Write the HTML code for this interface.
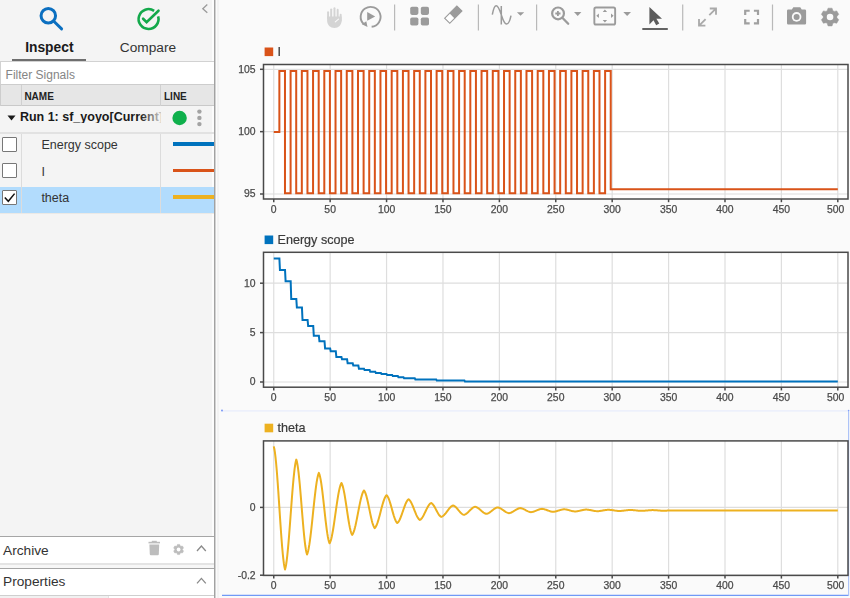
<!DOCTYPE html><html><head><meta charset="utf-8"><style>
html,body{margin:0;padding:0;width:850px;height:598px;overflow:hidden;background:#fafafa;font-family:'Liberation Sans', sans-serif;}
.t{position:absolute;line-height:1;white-space:nowrap;}
.r{position:absolute;}
svg{position:absolute;left:0;top:0;}
</style></head><body>
<div class="r" style="left:0px;top:0px;width:214px;height:598px;background:#f4f4f4;"></div>
<div class="r" style="left:212px;top:0px;width:2px;height:598px;background:#fcfcfc;"></div>
<div class="r" style="left:12px;top:58.5px;width:74px;height:3px;background:#6e6e6e;"></div>
<div class="t" style="left:25.20px;top:40.72px;font-size:13.8px;font-weight:bold;color:#1a1a1a;">Inspect</div>
<div class="t" style="left:119.80px;top:40.70px;font-size:13.7px;font-weight:normal;color:#333;">Compare</div>
<div class="r" style="left:0px;top:61.1px;width:214px;height:23.9px;background:#ffffff;box-sizing:border-box;border-top:1px solid #d2d2d2;border-left:1px solid #d2d2d2;border-bottom:1.2px solid #cdcdcd;"></div>
<div class="t" style="left:5.60px;top:69.24px;font-size:12px;font-weight:normal;color:#858585;">Filter Signals</div>
<div class="r" style="left:0px;top:85px;width:214px;height:21px;background:#e6e6e6;box-sizing:border-box;border-bottom:1.4px solid #c9c9c9;"></div>
<div class="r" style="left:0px;top:85px;width:1px;height:21px;background:#cdcdcd;"></div>
<div class="r" style="left:21px;top:84.5px;width:1px;height:21px;background:#d0d0d0;"></div>
<div class="r" style="left:160px;top:84.5px;width:1px;height:21px;background:#d0d0d0;"></div>
<div class="t" style="left:24.40px;top:91.93px;font-size:10px;font-weight:bold;color:#222;">NAME</div>
<div class="t" style="left:164.00px;top:91.93px;font-size:10px;font-weight:bold;color:#222;">LINE</div>
<div class="r" style="left:0px;top:132px;width:214px;height:1.5px;background:#e2e2e2;"></div>
<div class="t" style="left:19.90px;top:110.52px;font-size:12.5px;font-weight:bold;color:#1a1a1a;width:141px;overflow:hidden;">Run 1: sf_yoyo[Current]</div>
<div class="r" style="left:140px;top:107px;width:22px;height:24px;background:linear-gradient(to right, rgba(244,244,244,0), rgba(244,244,244,0.85));"></div>
<div class="r" style="left:0px;top:186.5px;width:214px;height:26.6px;background:#b2dcfd;"></div>
<div class="r" style="left:0px;top:213.1px;width:214px;height:0.9px;background:#ebe9e6;"></div>
<div class="r" style="left:21px;top:133.5px;width:1px;height:79px;background:#dcdcdc;"></div>
<div class="r" style="left:160px;top:133.5px;width:1px;height:79px;background:#dcdcdc;"></div>
<div class="t" style="left:41.40px;top:138.62px;font-size:12.5px;font-weight:normal;color:#333;">Energy scope</div>
<div class="t" style="left:41.40px;top:165.72px;font-size:12.5px;font-weight:normal;color:#333;">I</div>
<div class="t" style="left:41.40px;top:191.82px;font-size:12.5px;font-weight:normal;color:#333;">theta</div>
<div class="r" style="left:172.6px;top:142.2px;width:41.6px;height:3.9px;background:#0072bd;"></div>
<div class="r" style="left:172.6px;top:168.6px;width:41.6px;height:3.9px;background:#d95319;"></div>
<div class="r" style="left:172.6px;top:195.3px;width:41.6px;height:3.9px;background:#edb120;"></div>
<div class="r" style="left:2px;top:137.1px;width:15px;height:15px;background:#ffffff;box-sizing:border-box;border:1.3px solid #777;border-radius:1px;"></div>
<div class="r" style="left:2px;top:163.4px;width:15px;height:15px;background:#ffffff;box-sizing:border-box;border:1.3px solid #777;border-radius:1px;"></div>
<div class="r" style="left:2px;top:190.4px;width:15px;height:15px;background:#ffffff;box-sizing:border-box;border:1.3px solid #777;border-radius:1px;"></div>
<div class="r" style="left:0px;top:535.8px;width:214px;height:1.2px;background:#a6a6a6;"></div>
<div class="r" style="left:0px;top:537px;width:214px;height:26px;background:#ffffff;"></div>
<div class="r" style="left:0px;top:563px;width:214px;height:2.3px;background:#e4e4e4;"></div>
<div class="r" style="left:0px;top:565.3px;width:214px;height:2.6px;background:#f7f7f7;"></div>
<div class="r" style="left:0px;top:567.9px;width:214px;height:1.2px;background:#a6a6a6;"></div>
<div class="r" style="left:0px;top:569.1px;width:214px;height:26.2px;background:#ffffff;"></div>
<div class="r" style="left:0px;top:594.9px;width:214px;height:1.1px;background:#cfcfcf;"></div>
<div class="r" style="left:0px;top:596px;width:214px;height:2px;background:#ffffff;"></div>
<div class="r" style="left:0px;top:596px;width:108px;height:2px;background:#f1f1f1;"></div>
<div class="r" style="left:107.8px;top:596px;width:1px;height:2px;background:#e2e2e2;"></div>
<div class="t" style="left:3.00px;top:543.50px;font-size:13.7px;font-weight:normal;color:#333;">Archive</div>
<div class="t" style="left:3.00px;top:575.40px;font-size:13.7px;font-weight:normal;color:#333;">Properties</div>
<div class="r" style="left:214px;top:0px;width:1px;height:598px;background:#a2a2a2;"></div>
<div class="r" style="left:215px;top:0px;width:1px;height:598px;background:#d2d2d2;"></div>
<div class="r" style="left:216px;top:0px;width:1px;height:598px;background:#fbfbfb;"></div>
<div class="r" style="left:217px;top:0px;width:2px;height:598px;background:#f3f3f3;"></div>
<svg width="850" height="598" viewBox="0 0 850 598">
<circle cx="48.3" cy="15.8" r="7.25" fill="none" stroke="#0b6fc0" stroke-width="3"/>
<line x1="53.8" y1="21.2" x2="61.6" y2="28.9" stroke="#0b6fc0" stroke-width="2.9" stroke-linecap="round"/>
<path d="M 158.15 16.42 A 9.95 9.95 0 1 1 154.11 10.8" fill="none" stroke="#13a94b" stroke-width="2.6"/>
<path d="M 143.1 18.7 L 146.6 22.1 L 158.5 10.7" fill="none" stroke="#13a94b" stroke-width="2.6" stroke-linecap="round" stroke-linejoin="miter"/>
<path d="M 207.3 4.6 L 202.8 8.7 L 207.3 12.8" fill="none" stroke="#9a9a9a" stroke-width="1.3"/>
<path d="M 7.5 115.6 L 15.5 115.6 L 11.5 120.6 Z" fill="#1a1a1a"/>
<circle cx="179.6" cy="118" r="7.2" fill="#0fb04c"/>
<circle cx="199.4" cy="111.6" r="2.2" fill="#a3a3a3"/>
<circle cx="199.4" cy="117.9" r="2.2" fill="#a3a3a3"/>
<circle cx="199.4" cy="124.1" r="2.2" fill="#a3a3a3"/>
<path d="M 4.8 197.5 L 8.3 201.3 L 14.6 193.6" fill="none" stroke="#111" stroke-width="1.5"/>
<path d="M 149.4 544.6 L 159.2 544.6 L 158.8 554.3 Q 158.7 555.2 157.8 555.2 L 150.8 555.2 Q 149.9 555.2 149.8 554.3 Z" fill="#bdbdbd"/>
<rect x="148.5" y="541.8" width="11.5" height="1.6" fill="#bdbdbd"/><rect x="151.8" y="540.8" width="5" height="1.5" fill="#bdbdbd"/>
<path d="M 176.90 545.99 L 177.50 544.42 L 179.70 544.42 L 180.30 545.99 L 180.55 546.12 L 180.79 546.27 L 182.45 546.01 L 183.55 547.91 L 182.49 549.22 L 182.50 549.50 L 182.49 549.78 L 183.55 551.09 L 182.45 552.99 L 180.79 552.73 L 180.55 552.88 L 180.30 553.01 L 179.70 554.58 L 177.50 554.58 L 176.90 553.01 L 176.65 552.88 L 176.41 552.73 L 174.75 552.99 L 173.65 551.09 L 174.71 549.78 L 174.70 549.50 L 174.71 549.22 L 173.65 547.91 L 174.75 546.01 L 176.41 546.27 L 176.65 546.12 Z" fill="#bdbdbd" stroke="#bdbdbd" stroke-width="0.5" stroke-linejoin="round"/><circle cx="178.6" cy="549.5" r="1.9" fill="#ffffff"/>
<path d="M 197 551 L 201.4 546 L 205.8 551" fill="none" stroke="#8a8a8a" stroke-width="1.3"/>
<path d="M 197 583.4 L 201.4 578.4 L 205.8 583.4" fill="none" stroke="#8a8a8a" stroke-width="1.3"/>
<rect x="394.0" y="4.5" width="1.2" height="26" fill="#b9b9b9"/>
<rect x="477.8" y="4.5" width="1.2" height="26" fill="#b9b9b9"/>
<rect x="536.0" y="4.5" width="1.2" height="26" fill="#b9b9b9"/>
<rect x="682.1" y="4.5" width="1.2" height="26" fill="#b9b9b9"/>
<rect x="771.9" y="4.5" width="1.2" height="26" fill="#b9b9b9"/>
<rect x="327.1" y="11.2" width="1.95" height="7.800000000000001" rx="0.97" fill="#d4d4d4"/>
<rect x="330.2" y="8.4" width="1.95" height="10.6" rx="0.97" fill="#d4d4d4"/>
<rect x="333.5" y="7.2" width="1.95" height="11.8" rx="0.97" fill="#d4d4d4"/>
<rect x="336.7" y="8.8" width="1.95" height="10.2" rx="0.97" fill="#d4d4d4"/>
<rect x="339.7" y="13.8" width="1.95" height="8" rx="0.97" fill="#d4d4d4"/>
<path d="M 327.1 16.5 L 341.65 16.5 L 341.65 20.5 C 341.65 25 338.5 27.9 334.4 27.9 C 330.3 27.9 327.1 25 327.1 20.5 Z" fill="#d4d4d4"/>
<line x1="335.3" y1="21.8" x2="338.5" y2="19.1" stroke="#fafafa" stroke-width="1.1" stroke-linecap="round"/>
<path d="M 371.64 26.75 A 9.95 9.95 0 1 0 363.81 24.13" fill="none" stroke="#9b9b9b" stroke-width="1.9"/>
<path d="M 361.9 24.2 L 367.5 26.9 L 366.3 21.2 Z" fill="#9b9b9b"/>
<path d="M 367.2 12.1 L 375.2 16.45 L 367.2 20.8 Z" fill="#9b9b9b"/>
<rect x="410.2" y="6.8" width="8.2" height="8.1" rx="1.8" fill="#9b9b9b"/>
<rect x="410.2" y="17.4" width="8.2" height="8.1" rx="1.8" fill="#9b9b9b"/>
<rect x="420.8" y="6.8" width="8.2" height="8.1" rx="1.8" fill="#9b9b9b"/>
<rect x="420.8" y="17.4" width="8.2" height="8.1" rx="1.8" fill="#9b9b9b"/>
<g transform="translate(453.3,14.6) rotate(-45)"><rect x="-8.6" y="-3.6" width="17.2" height="7.2" fill="#fff" stroke="#9b9b9b" stroke-width="1.1"/><rect x="-1.8" y="-3.6" width="10.4" height="7.2" fill="#9b9b9b"/></g>
<path d="M 492.3 14.6 C 493.3 9.5 494.5 5.8 496.2 5.8 C 498.5 5.8 500 11 501.5 15.5 C 503 20 504.5 24 506.5 24 C 508.5 24 510.3 19 511 15.6 M 501.3 6 L 501.3 24.5" fill="none" stroke="#9b9b9b" stroke-width="1.5"/>
<path d="M 516.9 12.3 L 524.2 12.3 L 520.55 15.8 Z" fill="#9b9b9b"/>
<circle cx="558.05" cy="13.4" r="5.9" fill="none" stroke="#9b9b9b" stroke-width="2.2"/>
<line x1="562.6" y1="18" x2="568.2" y2="23.7" stroke="#9b9b9b" stroke-width="2.3" stroke-linecap="round"/>
<path d="M 557.9 10.9 L 557.9 16.1 M 555.3 13.5 L 560.5 13.5" stroke="#9b9b9b" stroke-width="1.8"/>
<path d="M 574 11.9 L 581.4 11.9 L 577.7 15.9 Z" fill="#9b9b9b"/>
<rect x="594.35" y="7.55" width="20.8" height="17" rx="1.6" fill="none" stroke="#9b9b9b" stroke-width="1.9"/>
<path d="M 602.7 11.9 L 604.9 9.6 L 607.1 11.9 Z M 602.7 19.9 L 604.9 22.4 L 607.1 19.9 Z M 598.9 13.6 L 596.3 15.8 L 598.9 18 Z M 611 13.6 L 613.6 15.8 L 611 18 Z" fill="#9b9b9b"/>
<path d="M 623.3 11.9 L 631 11.9 L 627.15 16 Z" fill="#9b9b9b"/>
<path d="M 649.4 7 L 662 18.7 L 656.4 18.7 L 659.3 23.6 L 656.2 25.2 L 653.5 20.3 L 649.4 24.4 Z" fill="#5c5c5c"/>
<rect x="642.3" y="28.05" width="25.5" height="1.9" fill="#5c5c5c"/>
<path d="M 705.6 19.1 L 699.6 25.1 M 699 18.9 L 699 25.6 L 705.4 25.6 M 709.3 15.2 L 715.4 9.1 M 709.8 8.5 L 716 8.5 L 716 14.7" fill="none" stroke="#aaaaaa" stroke-width="1.85"/>
<path d="M 745.2 14.9 L 745.2 10.75 L 749.7 10.75 M 753.9 10.75 L 758 10.75 L 758 14.9 M 758 19 L 758 23.3 L 753.9 23.3 M 749.7 23.3 L 745.2 23.3 L 745.2 19" fill="none" stroke="#a0a0a0" stroke-width="2.2"/>
<path d="M 787 10.8 Q 787 9.5 788.3 9.5 L 791.9 9.5 L 793.3 7.35 L 800.3 7.35 L 801.7 9.5 L 804.8 9.5 Q 806.1 9.5 806.1 10.8 L 806.1 23.2 Q 806.1 24.5 804.8 24.5 L 788.3 24.5 Q 787 24.5 787 23.2 Z" fill="#9b9b9b"/>
<circle cx="796.6" cy="16.9" r="4.8" fill="#fafafa"/><circle cx="796.6" cy="16.9" r="3.0" fill="#9b9b9b"/>
<path d="M 827.15 10.79 L 828.05 8.17 L 832.05 8.17 L 832.95 10.79 L 833.50 11.07 L 834.02 11.41 L 836.74 10.88 L 838.74 14.34 L 836.92 16.43 L 836.95 17.05 L 836.92 17.67 L 838.74 19.76 L 836.74 23.22 L 834.02 22.69 L 833.50 23.03 L 832.95 23.31 L 832.05 25.93 L 828.05 25.93 L 827.15 23.31 L 826.60 23.03 L 826.08 22.69 L 823.36 23.22 L 821.36 19.76 L 823.18 17.67 L 823.15 17.05 L 823.18 16.43 L 821.36 14.34 L 823.36 10.88 L 826.08 11.41 L 826.60 11.07 Z" fill="#9b9b9b" stroke="#9b9b9b" stroke-width="0.5" stroke-linejoin="round"/><circle cx="830.05" cy="17.05" r="3.3" fill="#fafafa"/>
</svg><svg width="850" height="598" viewBox="0 0 850 598" style="font-family:'Liberation Sans', sans-serif;will-change:transform">
<line x1="221.5" y1="410.9" x2="848" y2="410.9" stroke="#edf0fb" stroke-width="1.6"/>
<line x1="222" y1="595.4" x2="848.7" y2="595.4" stroke="#7099f6" stroke-width="1.1"/>
<line x1="848.6" y1="410.2" x2="848.6" y2="596" stroke="#a9c1f7" stroke-width="1.1"/><circle cx="848.6" cy="410.5" r="0.8" fill="#7f9df7"/>
<circle cx="222" cy="410.5" r="0.9" fill="#6f8ff5"/>
<rect x="263.5" y="64.5" width="584.5" height="134.5" fill="#ffffff"/>
<line x1="273.75" y1="64.5" x2="273.75" y2="199.0" stroke="#dedede" stroke-width="1.2"/>
<line x1="330.15" y1="64.5" x2="330.15" y2="199.0" stroke="#dedede" stroke-width="1.2"/>
<line x1="386.56" y1="64.5" x2="386.56" y2="199.0" stroke="#dedede" stroke-width="1.2"/>
<line x1="442.97" y1="64.5" x2="442.97" y2="199.0" stroke="#dedede" stroke-width="1.2"/>
<line x1="499.37" y1="64.5" x2="499.37" y2="199.0" stroke="#dedede" stroke-width="1.2"/>
<line x1="555.77" y1="64.5" x2="555.77" y2="199.0" stroke="#dedede" stroke-width="1.2"/>
<line x1="612.18" y1="64.5" x2="612.18" y2="199.0" stroke="#dedede" stroke-width="1.2"/>
<line x1="668.58" y1="64.5" x2="668.58" y2="199.0" stroke="#dedede" stroke-width="1.2"/>
<line x1="724.99" y1="64.5" x2="724.99" y2="199.0" stroke="#dedede" stroke-width="1.2"/>
<line x1="781.39" y1="64.5" x2="781.39" y2="199.0" stroke="#dedede" stroke-width="1.2"/>
<line x1="837.80" y1="64.5" x2="837.80" y2="199.0" stroke="#dedede" stroke-width="1.2"/>
<line x1="263.5" y1="194.00" x2="848.0" y2="194.00" stroke="#dedede" stroke-width="1.2"/>
<line x1="263.5" y1="131.65" x2="848.0" y2="131.65" stroke="#dedede" stroke-width="1.2"/>
<line x1="263.5" y1="69.30" x2="848.0" y2="69.30" stroke="#dedede" stroke-width="1.2"/>
<path d="M 273.75 132.05 L 279.37 132.05 L 279.37 70.90 L 279.37 70.90 L 284.98 70.90 L 284.98 193.20 L 290.60 193.20 L 290.60 70.90 L 296.21 70.90 L 296.21 193.20 L 301.83 193.20 L 301.83 70.90 L 307.45 70.90 L 307.45 193.20 L 313.06 193.20 L 313.06 70.90 L 318.68 70.90 L 318.68 193.20 L 324.30 193.20 L 324.30 70.90 L 329.91 70.90 L 329.91 193.20 L 335.53 193.20 L 335.53 70.90 L 341.14 70.90 L 341.14 193.20 L 346.76 193.20 L 346.76 70.90 L 352.38 70.90 L 352.38 193.20 L 357.99 193.20 L 357.99 70.90 L 363.61 70.90 L 363.61 193.20 L 369.23 193.20 L 369.23 70.90 L 374.84 70.90 L 374.84 193.20 L 380.46 193.20 L 380.46 70.90 L 386.07 70.90 L 386.07 193.20 L 391.69 193.20 L 391.69 70.90 L 397.31 70.90 L 397.31 193.20 L 402.92 193.20 L 402.92 70.90 L 408.54 70.90 L 408.54 193.20 L 414.16 193.20 L 414.16 70.90 L 419.77 70.90 L 419.77 193.20 L 425.39 193.20 L 425.39 70.90 L 431.00 70.90 L 431.00 193.20 L 436.62 193.20 L 436.62 70.90 L 442.24 70.90 L 442.24 193.20 L 447.85 193.20 L 447.85 70.90 L 453.47 70.90 L 453.47 193.20 L 459.09 193.20 L 459.09 70.90 L 464.70 70.90 L 464.70 193.20 L 470.32 193.20 L 470.32 70.90 L 475.93 70.90 L 475.93 193.20 L 481.55 193.20 L 481.55 70.90 L 487.17 70.90 L 487.17 193.20 L 492.78 193.20 L 492.78 70.90 L 498.40 70.90 L 498.40 193.20 L 504.02 193.20 L 504.02 70.90 L 509.63 70.90 L 509.63 193.20 L 515.25 193.20 L 515.25 70.90 L 520.86 70.90 L 520.86 193.20 L 526.48 193.20 L 526.48 70.90 L 532.10 70.90 L 532.10 193.20 L 537.71 193.20 L 537.71 70.90 L 543.33 70.90 L 543.33 193.20 L 548.95 193.20 L 548.95 70.90 L 554.56 70.90 L 554.56 193.20 L 560.18 193.20 L 560.18 70.90 L 565.79 70.90 L 565.79 193.20 L 571.41 193.20 L 571.41 70.90 L 577.03 70.90 L 577.03 193.20 L 582.64 193.20 L 582.64 70.90 L 588.26 70.90 L 588.26 193.20 L 593.88 193.20 L 593.88 70.90 L 599.49 70.90 L 599.49 193.20 L 605.11 193.20 L 605.11 70.90 L 610.72 70.90 L 610.72 189.29 L 837.80 189.29" fill="none" stroke="#d95319" stroke-width="2" stroke-linejoin="miter"/>
<rect x="263.5" y="64.5" width="584.5" height="134.5" fill="none" stroke="#4a4a4a" stroke-width="1.5"/>
<line x1="260.0" y1="194.00" x2="263.5" y2="194.00" stroke="#4a4a4a" stroke-width="1.5"/>
<text x="255.6" y="197.40" text-anchor="end" font-size="10.4" fill="#4a4a4a" stroke="#4a4a4a" stroke-width="0.25">95</text>
<line x1="260.0" y1="131.65" x2="263.5" y2="131.65" stroke="#4a4a4a" stroke-width="1.5"/>
<text x="255.6" y="135.05" text-anchor="end" font-size="10.4" fill="#4a4a4a" stroke="#4a4a4a" stroke-width="0.25">100</text>
<line x1="260.0" y1="69.30" x2="263.5" y2="69.30" stroke="#4a4a4a" stroke-width="1.5"/>
<text x="255.6" y="72.70" text-anchor="end" font-size="10.4" fill="#4a4a4a" stroke="#4a4a4a" stroke-width="0.25">105</text>
<line x1="273.75" y1="199.0" x2="273.75" y2="202.2" stroke="#4a4a4a" stroke-width="1.5"/>
<text x="273.75" y="212.60" text-anchor="middle" font-size="10.4" fill="#4a4a4a" stroke="#4a4a4a" stroke-width="0.25">0</text>
<line x1="330.15" y1="199.0" x2="330.15" y2="202.2" stroke="#4a4a4a" stroke-width="1.5"/>
<text x="330.15" y="212.60" text-anchor="middle" font-size="10.4" fill="#4a4a4a" stroke="#4a4a4a" stroke-width="0.25">50</text>
<line x1="386.56" y1="199.0" x2="386.56" y2="202.2" stroke="#4a4a4a" stroke-width="1.5"/>
<text x="386.56" y="212.60" text-anchor="middle" font-size="10.4" fill="#4a4a4a" stroke="#4a4a4a" stroke-width="0.25">100</text>
<line x1="442.97" y1="199.0" x2="442.97" y2="202.2" stroke="#4a4a4a" stroke-width="1.5"/>
<text x="442.97" y="212.60" text-anchor="middle" font-size="10.4" fill="#4a4a4a" stroke="#4a4a4a" stroke-width="0.25">150</text>
<line x1="499.37" y1="199.0" x2="499.37" y2="202.2" stroke="#4a4a4a" stroke-width="1.5"/>
<text x="499.37" y="212.60" text-anchor="middle" font-size="10.4" fill="#4a4a4a" stroke="#4a4a4a" stroke-width="0.25">200</text>
<line x1="555.77" y1="199.0" x2="555.77" y2="202.2" stroke="#4a4a4a" stroke-width="1.5"/>
<text x="555.77" y="212.60" text-anchor="middle" font-size="10.4" fill="#4a4a4a" stroke="#4a4a4a" stroke-width="0.25">250</text>
<line x1="612.18" y1="199.0" x2="612.18" y2="202.2" stroke="#4a4a4a" stroke-width="1.5"/>
<text x="612.18" y="212.60" text-anchor="middle" font-size="10.4" fill="#4a4a4a" stroke="#4a4a4a" stroke-width="0.25">300</text>
<line x1="668.58" y1="199.0" x2="668.58" y2="202.2" stroke="#4a4a4a" stroke-width="1.5"/>
<text x="668.58" y="212.60" text-anchor="middle" font-size="10.4" fill="#4a4a4a" stroke="#4a4a4a" stroke-width="0.25">350</text>
<line x1="724.99" y1="199.0" x2="724.99" y2="202.2" stroke="#4a4a4a" stroke-width="1.5"/>
<text x="724.99" y="212.60" text-anchor="middle" font-size="10.4" fill="#4a4a4a" stroke="#4a4a4a" stroke-width="0.25">400</text>
<line x1="781.39" y1="199.0" x2="781.39" y2="202.2" stroke="#4a4a4a" stroke-width="1.5"/>
<text x="781.39" y="212.60" text-anchor="middle" font-size="10.4" fill="#4a4a4a" stroke="#4a4a4a" stroke-width="0.25">450</text>
<line x1="837.80" y1="199.0" x2="837.80" y2="202.2" stroke="#4a4a4a" stroke-width="1.5"/>
<text x="835.70" y="212.60" text-anchor="middle" font-size="10.4" fill="#4a4a4a" stroke="#4a4a4a" stroke-width="0.25">500</text>
<rect x="264.6" y="47.5" width="8.6" height="8.6" fill="#d95319"/>
<text x="277.5" y="56.20" font-size="12.6" fill="#3a3a3a" stroke="#3a3a3a" stroke-width="0.2">I</text>
<rect x="263.5" y="252.3" width="584.5" height="134.89999999999998" fill="#ffffff"/>
<line x1="273.75" y1="252.3" x2="273.75" y2="387.2" stroke="#dedede" stroke-width="1.2"/>
<line x1="330.15" y1="252.3" x2="330.15" y2="387.2" stroke="#dedede" stroke-width="1.2"/>
<line x1="386.56" y1="252.3" x2="386.56" y2="387.2" stroke="#dedede" stroke-width="1.2"/>
<line x1="442.97" y1="252.3" x2="442.97" y2="387.2" stroke="#dedede" stroke-width="1.2"/>
<line x1="499.37" y1="252.3" x2="499.37" y2="387.2" stroke="#dedede" stroke-width="1.2"/>
<line x1="555.77" y1="252.3" x2="555.77" y2="387.2" stroke="#dedede" stroke-width="1.2"/>
<line x1="612.18" y1="252.3" x2="612.18" y2="387.2" stroke="#dedede" stroke-width="1.2"/>
<line x1="668.58" y1="252.3" x2="668.58" y2="387.2" stroke="#dedede" stroke-width="1.2"/>
<line x1="724.99" y1="252.3" x2="724.99" y2="387.2" stroke="#dedede" stroke-width="1.2"/>
<line x1="781.39" y1="252.3" x2="781.39" y2="387.2" stroke="#dedede" stroke-width="1.2"/>
<line x1="837.80" y1="252.3" x2="837.80" y2="387.2" stroke="#dedede" stroke-width="1.2"/>
<line x1="263.5" y1="382.00" x2="848.0" y2="382.00" stroke="#dedede" stroke-width="1.2"/>
<line x1="263.5" y1="332.60" x2="848.0" y2="332.60" stroke="#dedede" stroke-width="1.2"/>
<line x1="263.5" y1="283.20" x2="848.0" y2="283.20" stroke="#dedede" stroke-width="1.2"/>
<path d="M 273.75 258.50 L 279.39 258.50 L 279.95 269.96 L 285.03 269.96 L 285.60 281.22 L 290.67 281.22 L 291.24 299.01 L 296.31 299.01 L 296.88 307.60 L 301.95 307.60 L 302.52 319.95 L 307.59 319.95 L 308.16 325.88 L 313.23 325.88 L 313.80 335.86 L 318.87 335.86 L 319.44 341.20 L 324.51 341.20 L 325.08 348.51 L 330.15 348.51 L 330.72 351.37 L 335.80 351.37 L 336.36 357.00 L 341.44 357.00 L 342.00 359.28 L 347.08 359.28 L 347.64 363.33 L 352.72 363.33 L 353.28 365.60 L 358.36 365.60 L 358.92 368.76 L 364.00 368.76 L 364.56 370.05 L 369.64 370.05 L 370.20 371.82 L 375.28 371.82 L 375.84 373.01 L 380.92 373.01 L 381.48 374.10 L 386.56 374.10 L 387.12 374.99 L 392.20 374.99 L 392.76 375.97 L 397.84 375.97 L 398.41 377.16 L 403.48 377.16 L 404.05 378.15 L 414.76 378.15 L 415.33 379.43 L 436.20 379.43 L 436.76 380.42 L 464.40 380.42 L 464.96 381.51 L 837.80 381.51" fill="none" stroke="#0072bd" stroke-width="2" stroke-linejoin="miter"/>
<rect x="263.5" y="252.3" width="584.5" height="134.89999999999998" fill="none" stroke="#4a4a4a" stroke-width="1.5"/>
<line x1="260.0" y1="382.00" x2="263.5" y2="382.00" stroke="#4a4a4a" stroke-width="1.5"/>
<text x="255.6" y="385.40" text-anchor="end" font-size="10.4" fill="#4a4a4a" stroke="#4a4a4a" stroke-width="0.25">0</text>
<line x1="260.0" y1="332.60" x2="263.5" y2="332.60" stroke="#4a4a4a" stroke-width="1.5"/>
<text x="255.6" y="336.00" text-anchor="end" font-size="10.4" fill="#4a4a4a" stroke="#4a4a4a" stroke-width="0.25">5</text>
<line x1="260.0" y1="283.20" x2="263.5" y2="283.20" stroke="#4a4a4a" stroke-width="1.5"/>
<text x="255.6" y="286.60" text-anchor="end" font-size="10.4" fill="#4a4a4a" stroke="#4a4a4a" stroke-width="0.25">10</text>
<line x1="273.75" y1="387.2" x2="273.75" y2="390.4" stroke="#4a4a4a" stroke-width="1.5"/>
<text x="273.75" y="400.80" text-anchor="middle" font-size="10.4" fill="#4a4a4a" stroke="#4a4a4a" stroke-width="0.25">0</text>
<line x1="330.15" y1="387.2" x2="330.15" y2="390.4" stroke="#4a4a4a" stroke-width="1.5"/>
<text x="330.15" y="400.80" text-anchor="middle" font-size="10.4" fill="#4a4a4a" stroke="#4a4a4a" stroke-width="0.25">50</text>
<line x1="386.56" y1="387.2" x2="386.56" y2="390.4" stroke="#4a4a4a" stroke-width="1.5"/>
<text x="386.56" y="400.80" text-anchor="middle" font-size="10.4" fill="#4a4a4a" stroke="#4a4a4a" stroke-width="0.25">100</text>
<line x1="442.97" y1="387.2" x2="442.97" y2="390.4" stroke="#4a4a4a" stroke-width="1.5"/>
<text x="442.97" y="400.80" text-anchor="middle" font-size="10.4" fill="#4a4a4a" stroke="#4a4a4a" stroke-width="0.25">150</text>
<line x1="499.37" y1="387.2" x2="499.37" y2="390.4" stroke="#4a4a4a" stroke-width="1.5"/>
<text x="499.37" y="400.80" text-anchor="middle" font-size="10.4" fill="#4a4a4a" stroke="#4a4a4a" stroke-width="0.25">200</text>
<line x1="555.77" y1="387.2" x2="555.77" y2="390.4" stroke="#4a4a4a" stroke-width="1.5"/>
<text x="555.77" y="400.80" text-anchor="middle" font-size="10.4" fill="#4a4a4a" stroke="#4a4a4a" stroke-width="0.25">250</text>
<line x1="612.18" y1="387.2" x2="612.18" y2="390.4" stroke="#4a4a4a" stroke-width="1.5"/>
<text x="612.18" y="400.80" text-anchor="middle" font-size="10.4" fill="#4a4a4a" stroke="#4a4a4a" stroke-width="0.25">300</text>
<line x1="668.58" y1="387.2" x2="668.58" y2="390.4" stroke="#4a4a4a" stroke-width="1.5"/>
<text x="668.58" y="400.80" text-anchor="middle" font-size="10.4" fill="#4a4a4a" stroke="#4a4a4a" stroke-width="0.25">350</text>
<line x1="724.99" y1="387.2" x2="724.99" y2="390.4" stroke="#4a4a4a" stroke-width="1.5"/>
<text x="724.99" y="400.80" text-anchor="middle" font-size="10.4" fill="#4a4a4a" stroke="#4a4a4a" stroke-width="0.25">400</text>
<line x1="781.39" y1="387.2" x2="781.39" y2="390.4" stroke="#4a4a4a" stroke-width="1.5"/>
<text x="781.39" y="400.80" text-anchor="middle" font-size="10.4" fill="#4a4a4a" stroke="#4a4a4a" stroke-width="0.25">450</text>
<line x1="837.80" y1="387.2" x2="837.80" y2="390.4" stroke="#4a4a4a" stroke-width="1.5"/>
<text x="835.70" y="400.80" text-anchor="middle" font-size="10.4" fill="#4a4a4a" stroke="#4a4a4a" stroke-width="0.25">500</text>
<rect x="264.6" y="235.5" width="8.6" height="8.6" fill="#0072bd"/>
<text x="277.5" y="244.20" font-size="12.6" fill="#3a3a3a" stroke="#3a3a3a" stroke-width="0.2">Energy scope</text>
<rect x="263.5" y="440.9" width="584.5" height="134.5" fill="#ffffff"/>
<line x1="273.75" y1="440.9" x2="273.75" y2="575.4" stroke="#dedede" stroke-width="1.2"/>
<line x1="330.15" y1="440.9" x2="330.15" y2="575.4" stroke="#dedede" stroke-width="1.2"/>
<line x1="386.56" y1="440.9" x2="386.56" y2="575.4" stroke="#dedede" stroke-width="1.2"/>
<line x1="442.97" y1="440.9" x2="442.97" y2="575.4" stroke="#dedede" stroke-width="1.2"/>
<line x1="499.37" y1="440.9" x2="499.37" y2="575.4" stroke="#dedede" stroke-width="1.2"/>
<line x1="555.77" y1="440.9" x2="555.77" y2="575.4" stroke="#dedede" stroke-width="1.2"/>
<line x1="612.18" y1="440.9" x2="612.18" y2="575.4" stroke="#dedede" stroke-width="1.2"/>
<line x1="668.58" y1="440.9" x2="668.58" y2="575.4" stroke="#dedede" stroke-width="1.2"/>
<line x1="724.99" y1="440.9" x2="724.99" y2="575.4" stroke="#dedede" stroke-width="1.2"/>
<line x1="781.39" y1="440.9" x2="781.39" y2="575.4" stroke="#dedede" stroke-width="1.2"/>
<line x1="837.80" y1="440.9" x2="837.80" y2="575.4" stroke="#dedede" stroke-width="1.2"/>
<line x1="263.5" y1="575.20" x2="848.0" y2="575.20" stroke="#dedede" stroke-width="1.2"/>
<line x1="263.5" y1="507.40" x2="848.0" y2="507.40" stroke="#dedede" stroke-width="1.2"/>
<path d="M 273.75 446.38 L 274.31 448.76 L 274.88 452.18 L 275.44 456.61 L 276.01 461.99 L 276.57 468.22 L 277.13 475.21 L 277.70 482.82 L 278.26 490.91 L 278.83 499.33 L 279.39 507.91 L 279.95 516.49 L 280.52 524.91 L 281.08 533.00 L 281.65 540.61 L 282.21 547.59 L 282.77 553.83 L 283.34 559.21 L 283.90 563.64 L 284.47 567.06 L 285.03 569.44 L 285.60 567.32 L 286.16 564.26 L 286.72 560.30 L 287.29 555.50 L 287.85 549.94 L 288.42 543.71 L 288.98 536.91 L 289.54 529.69 L 290.11 522.18 L 290.67 514.52 L 291.24 506.86 L 291.80 499.34 L 292.36 492.12 L 292.93 485.33 L 293.49 479.10 L 294.06 473.53 L 294.62 468.73 L 295.18 464.78 L 295.75 461.72 L 296.31 459.60 L 296.88 461.55 L 297.44 464.40 L 298.00 468.10 L 298.57 472.60 L 299.13 477.82 L 299.70 483.64 L 300.26 489.97 L 300.82 496.66 L 301.39 503.57 L 301.95 510.55 L 302.52 517.46 L 303.08 524.15 L 303.64 530.48 L 304.21 536.31 L 304.77 541.52 L 305.34 546.02 L 305.90 549.72 L 306.46 552.57 L 307.03 554.52 L 307.59 553.03 L 308.16 550.92 L 308.72 548.19 L 309.29 544.88 L 309.85 541.05 L 310.41 536.75 L 310.98 532.05 L 311.54 527.04 L 312.11 521.79 L 312.67 516.39 L 313.23 510.95 L 313.80 505.56 L 314.36 500.31 L 314.93 495.29 L 315.49 490.59 L 316.05 486.29 L 316.62 482.46 L 317.18 479.16 L 317.75 476.43 L 318.31 474.31 L 318.87 472.82 L 319.44 474.27 L 320.00 476.39 L 320.57 479.14 L 321.13 482.48 L 321.69 486.35 L 322.26 490.68 L 322.82 495.38 L 323.39 500.35 L 323.95 505.48 L 324.51 510.67 L 325.08 515.81 L 325.64 520.77 L 326.21 525.47 L 326.77 529.80 L 327.33 533.68 L 327.90 537.02 L 328.46 539.77 L 329.03 541.88 L 329.59 543.33 L 330.15 542.24 L 330.72 540.67 L 331.28 538.66 L 331.85 536.22 L 332.41 533.39 L 332.98 530.21 L 333.54 526.74 L 334.10 523.03 L 334.67 519.16 L 335.23 515.17 L 335.80 511.15 L 336.36 507.17 L 336.92 503.29 L 337.49 499.59 L 338.05 496.12 L 338.62 492.94 L 339.18 490.11 L 339.74 487.67 L 340.31 485.65 L 340.87 484.09 L 341.44 482.99 L 342.00 484.06 L 342.56 485.61 L 343.13 487.64 L 343.69 490.10 L 344.26 492.95 L 344.82 496.13 L 345.38 499.59 L 345.95 503.24 L 346.51 507.02 L 347.08 510.83 L 347.64 514.61 L 348.20 518.27 L 348.77 521.72 L 349.33 524.91 L 349.90 527.76 L 350.46 530.21 L 351.02 532.24 L 351.59 533.79 L 352.15 534.86 L 352.72 534.05 L 353.28 532.90 L 353.85 531.42 L 354.41 529.62 L 354.97 527.54 L 355.54 525.20 L 356.10 522.65 L 356.67 519.92 L 357.23 517.06 L 357.79 514.13 L 358.36 511.18 L 358.92 508.24 L 359.49 505.39 L 360.05 502.66 L 360.61 500.11 L 361.18 497.77 L 361.74 495.69 L 362.31 493.89 L 362.87 492.41 L 363.43 491.26 L 364.00 490.45 L 364.56 491.22 L 365.13 492.35 L 365.69 493.82 L 366.25 495.60 L 366.82 497.67 L 367.38 499.98 L 367.95 502.49 L 368.51 505.14 L 369.07 507.88 L 369.64 510.65 L 370.20 513.39 L 370.77 516.04 L 371.33 518.55 L 371.89 520.86 L 372.46 522.93 L 373.02 524.71 L 373.59 526.18 L 374.15 527.31 L 374.71 528.08 L 375.28 527.48 L 375.84 526.63 L 376.41 525.53 L 376.97 524.20 L 377.54 522.66 L 378.10 520.93 L 378.66 519.04 L 379.23 517.02 L 379.79 514.90 L 380.36 512.73 L 380.92 510.54 L 381.48 508.37 L 382.05 506.26 L 382.61 504.24 L 383.18 502.35 L 383.74 500.62 L 384.30 499.07 L 384.87 497.75 L 385.43 496.65 L 386.00 495.79 L 386.56 495.20 L 387.12 495.77 L 387.69 496.60 L 388.25 497.69 L 388.82 499.00 L 389.38 500.53 L 389.94 502.24 L 390.51 504.09 L 391.07 506.05 L 391.64 508.07 L 392.20 510.12 L 392.76 512.14 L 393.33 514.10 L 393.89 515.95 L 394.46 517.66 L 395.02 519.19 L 395.58 520.50 L 396.15 521.59 L 396.71 522.42 L 397.28 522.99 L 397.84 522.54 L 398.41 521.88 L 398.97 521.02 L 399.53 519.98 L 400.10 518.78 L 400.66 517.43 L 401.23 515.97 L 401.79 514.41 L 402.35 512.78 L 402.92 511.13 L 403.48 509.47 L 404.05 507.85 L 404.61 506.29 L 405.17 504.82 L 405.74 503.48 L 406.30 502.27 L 406.87 501.24 L 407.43 500.38 L 407.99 499.72 L 408.56 499.26 L 409.12 499.66 L 409.69 500.24 L 410.25 500.98 L 410.81 501.89 L 411.38 502.93 L 411.94 504.11 L 412.51 505.39 L 413.07 506.75 L 413.63 508.16 L 414.20 509.60 L 414.76 511.05 L 415.33 512.46 L 415.89 513.82 L 416.45 515.10 L 417.02 516.27 L 417.58 517.32 L 418.15 518.22 L 418.71 518.97 L 419.27 519.54 L 419.84 519.94 L 420.40 519.62 L 420.97 519.14 L 421.53 518.53 L 422.10 517.79 L 422.66 516.93 L 423.22 515.97 L 423.79 514.92 L 424.35 513.81 L 424.92 512.65 L 425.48 511.47 L 426.04 510.29 L 426.61 509.13 L 427.17 508.01 L 427.74 506.96 L 428.30 506.00 L 428.86 505.14 L 429.43 504.40 L 429.99 503.79 L 430.56 503.32 L 431.12 502.99 L 431.68 503.30 L 432.25 503.75 L 432.81 504.34 L 433.38 505.06 L 433.94 505.89 L 434.50 506.82 L 435.07 507.82 L 435.63 508.87 L 436.20 509.94 L 436.76 511.02 L 437.32 512.07 L 437.89 513.07 L 438.45 514.00 L 439.02 514.83 L 439.58 515.55 L 440.14 516.14 L 440.71 516.59 L 441.27 516.89 L 441.84 516.68 L 442.40 516.39 L 442.97 516.01 L 443.53 515.55 L 444.09 515.01 L 444.66 514.41 L 445.22 513.76 L 445.79 513.06 L 446.35 512.33 L 446.91 511.58 L 447.48 510.82 L 448.04 510.07 L 448.61 509.33 L 449.17 508.63 L 449.73 507.98 L 450.30 507.38 L 450.86 506.85 L 451.43 506.38 L 451.99 506.00 L 452.55 505.71 L 453.12 505.50 L 453.68 505.69 L 454.25 505.97 L 454.81 506.34 L 455.37 506.78 L 455.94 507.30 L 456.50 507.87 L 457.07 508.50 L 457.63 509.15 L 458.19 509.84 L 458.76 510.52 L 459.32 511.21 L 459.89 511.86 L 460.45 512.49 L 461.01 513.06 L 461.58 513.58 L 462.14 514.02 L 462.71 514.39 L 463.27 514.67 L 463.83 514.86 L 464.40 514.70 L 464.96 514.47 L 465.53 514.18 L 466.09 513.83 L 466.66 513.41 L 467.22 512.95 L 467.78 512.45 L 468.35 511.91 L 468.91 511.36 L 469.48 510.79 L 470.04 510.22 L 470.60 509.67 L 471.17 509.13 L 471.73 508.63 L 472.30 508.17 L 472.86 507.75 L 473.42 507.40 L 473.99 507.11 L 474.55 506.88 L 475.12 506.72 L 475.68 506.86 L 476.24 507.06 L 476.81 507.31 L 477.37 507.63 L 477.94 507.99 L 478.50 508.39 L 479.06 508.83 L 479.63 509.30 L 480.19 509.78 L 480.76 510.28 L 481.32 510.78 L 481.88 511.27 L 482.45 511.73 L 483.01 512.17 L 483.58 512.58 L 484.14 512.94 L 484.70 513.25 L 485.27 513.51 L 485.83 513.70 L 486.40 513.84 L 486.96 513.72 L 487.52 513.54 L 488.09 513.31 L 488.65 513.02 L 489.22 512.70 L 489.78 512.33 L 490.35 511.93 L 490.91 511.51 L 491.47 511.07 L 492.04 510.62 L 492.60 510.17 L 493.17 509.73 L 493.73 509.31 L 494.29 508.91 L 494.86 508.54 L 495.42 508.22 L 495.99 507.94 L 496.55 507.70 L 497.11 507.52 L 497.68 507.40 L 498.24 507.51 L 498.81 507.67 L 499.37 507.88 L 499.93 508.13 L 500.50 508.42 L 501.06 508.75 L 501.63 509.11 L 502.19 509.49 L 502.75 509.88 L 503.32 510.28 L 503.88 510.68 L 504.45 511.08 L 505.01 511.46 L 505.57 511.81 L 506.14 512.14 L 506.70 512.43 L 507.27 512.68 L 507.83 512.89 L 508.39 513.05 L 508.96 513.16 L 509.52 513.06 L 510.09 512.92 L 510.65 512.74 L 511.22 512.52 L 511.78 512.26 L 512.34 511.97 L 512.91 511.66 L 513.47 511.32 L 514.04 510.98 L 514.60 510.62 L 515.16 510.27 L 515.73 509.92 L 516.29 509.58 L 516.86 509.27 L 517.42 508.98 L 517.98 508.72 L 518.55 508.50 L 519.11 508.32 L 519.68 508.18 L 520.24 508.08 L 520.80 508.16 L 521.37 508.28 L 521.93 508.44 L 522.50 508.64 L 523.06 508.86 L 523.62 509.11 L 524.19 509.38 L 524.75 509.67 L 525.32 509.96 L 525.88 510.26 L 526.44 510.56 L 527.01 510.84 L 527.57 511.12 L 528.14 511.37 L 528.70 511.59 L 529.26 511.78 L 529.83 511.94 L 530.39 512.06 L 530.96 512.15 L 531.54 512.08 L 532.12 511.98 L 532.70 511.85 L 533.28 511.69 L 533.87 511.51 L 534.45 511.31 L 535.03 511.09 L 535.61 510.86 L 536.19 510.62 L 536.78 510.38 L 537.36 510.14 L 537.94 509.90 L 538.52 509.68 L 539.10 509.48 L 539.68 509.30 L 540.27 509.14 L 540.85 509.01 L 541.43 508.92 L 542.01 508.85 L 542.59 508.91 L 543.18 509.00 L 543.76 509.11 L 544.34 509.26 L 544.92 509.42 L 545.50 509.60 L 546.09 509.80 L 546.67 510.01 L 547.25 510.23 L 547.83 510.45 L 548.41 510.67 L 548.99 510.88 L 549.58 511.07 L 550.16 511.26 L 550.74 511.42 L 551.32 511.56 L 551.90 511.68 L 552.49 511.77 L 553.07 511.83 L 553.65 511.78 L 554.23 511.70 L 554.81 511.60 L 555.40 511.48 L 555.98 511.34 L 556.56 511.18 L 557.14 511.01 L 557.72 510.83 L 558.30 510.64 L 558.89 510.45 L 559.47 510.27 L 560.05 510.09 L 560.63 509.91 L 561.21 509.76 L 561.80 509.62 L 562.38 509.49 L 562.96 509.39 L 563.54 509.32 L 564.12 509.27 L 564.70 509.31 L 565.29 509.38 L 565.87 509.46 L 566.45 509.57 L 567.03 509.69 L 567.61 509.82 L 568.20 509.97 L 568.78 510.13 L 569.36 510.29 L 569.94 510.45 L 570.52 510.61 L 571.11 510.77 L 571.69 510.91 L 572.27 511.05 L 572.85 511.17 L 573.43 511.27 L 574.01 511.36 L 574.60 511.43 L 575.18 511.47 L 575.76 511.43 L 576.34 511.38 L 576.92 511.30 L 577.51 511.21 L 578.09 511.11 L 578.67 510.99 L 579.25 510.86 L 579.83 510.73 L 580.42 510.59 L 581.00 510.45 L 581.58 510.31 L 582.16 510.18 L 582.74 510.05 L 583.32 509.94 L 583.91 509.83 L 584.49 509.74 L 585.07 509.67 L 585.65 509.61 L 586.23 509.57 L 586.82 509.61 L 587.40 509.66 L 587.98 509.72 L 588.56 509.80 L 589.14 509.89 L 589.72 509.99 L 590.31 510.10 L 590.89 510.21 L 591.47 510.33 L 592.05 510.45 L 592.63 510.57 L 593.22 510.68 L 593.80 510.79 L 594.38 510.89 L 594.96 510.98 L 595.54 511.06 L 596.13 511.12 L 596.71 511.17 L 597.29 511.21 L 597.87 511.18 L 598.45 511.13 L 599.03 511.08 L 599.62 511.01 L 600.20 510.94 L 600.78 510.85 L 601.36 510.76 L 601.94 510.66 L 602.53 510.56 L 603.11 510.45 L 603.69 510.35 L 604.27 510.25 L 604.85 510.16 L 605.44 510.07 L 606.02 509.99 L 606.60 509.93 L 607.18 509.87 L 607.76 509.83 L 608.34 509.80 L 608.93 509.83 L 609.51 509.86 L 610.09 509.91 L 610.67 509.97 L 611.25 510.03 L 611.84 510.11 L 612.42 510.19 L 613.00 510.27 L 613.58 510.36 L 614.16 510.45 L 614.74 510.54 L 615.33 510.62 L 615.91 510.70 L 616.49 510.78 L 617.07 510.84 L 617.65 510.90 L 618.24 510.95 L 618.82 510.98 L 619.40 511.01 L 619.98 510.99 L 620.56 510.96 L 621.15 510.92 L 621.73 510.87 L 622.31 510.81 L 622.89 510.75 L 623.47 510.68 L 624.05 510.60 L 624.64 510.53 L 625.22 510.45 L 625.80 510.38 L 626.38 510.30 L 626.96 510.23 L 627.55 510.17 L 628.13 510.11 L 628.71 510.06 L 629.29 510.02 L 629.87 509.99 L 630.46 509.97 L 631.04 509.99 L 631.62 510.02 L 632.20 510.05 L 632.78 510.09 L 633.36 510.14 L 633.95 510.20 L 634.53 510.26 L 635.11 510.32 L 635.69 510.38 L 636.27 510.45 L 636.86 510.52 L 637.44 510.58 L 638.02 510.64 L 638.60 510.69 L 639.18 510.74 L 639.77 510.78 L 640.35 510.82 L 640.93 510.85 L 641.51 510.86 L 642.09 510.85 L 642.67 510.82 L 643.26 510.79 L 643.84 510.76 L 644.42 510.72 L 645.00 510.67 L 645.58 510.62 L 646.17 510.56 L 646.75 510.51 L 647.33 510.45 L 647.91 510.40 L 648.49 510.34 L 649.07 510.29 L 649.66 510.24 L 650.24 510.20 L 650.82 510.16 L 651.40 510.13 L 651.98 510.11 L 652.57 510.10 L 653.15 510.11 L 653.73 510.13 L 654.31 510.16 L 654.89 510.19 L 655.48 510.22 L 656.06 510.26 L 656.64 510.31 L 657.22 510.35 L 657.80 510.40 L 658.38 510.45 L 658.97 510.50 L 659.55 510.55 L 660.13 510.59 L 660.71 510.63 L 661.29 510.67 L 661.88 510.70 L 662.46 510.72 L 663.04 510.74 L 663.62 510.76 L 664.22 510.74 L 664.82 510.73 L 665.43 510.70 L 666.03 510.67 L 666.63 510.64 L 667.23 510.60 L 667.83 510.57 L 668.43 510.53 L 669.04 510.51 L 669.64 510.48 L 670.24 510.46 L 670.84 510.45 L 837.80 510.45" fill="none" stroke="#edb120" stroke-width="2" stroke-linejoin="round"/>
<rect x="263.5" y="440.9" width="584.5" height="134.5" fill="none" stroke="#4a4a4a" stroke-width="1.5"/>
<line x1="260.0" y1="575.20" x2="263.5" y2="575.20" stroke="#4a4a4a" stroke-width="1.5"/>
<text x="255.6" y="578.60" text-anchor="end" font-size="10.4" fill="#4a4a4a" stroke="#4a4a4a" stroke-width="0.25">-0.2</text>
<line x1="260.0" y1="507.40" x2="263.5" y2="507.40" stroke="#4a4a4a" stroke-width="1.5"/>
<text x="255.6" y="510.80" text-anchor="end" font-size="10.4" fill="#4a4a4a" stroke="#4a4a4a" stroke-width="0.25">0</text>
<line x1="273.75" y1="575.4" x2="273.75" y2="578.6" stroke="#4a4a4a" stroke-width="1.5"/>
<text x="273.75" y="589.00" text-anchor="middle" font-size="10.4" fill="#4a4a4a" stroke="#4a4a4a" stroke-width="0.25">0</text>
<line x1="330.15" y1="575.4" x2="330.15" y2="578.6" stroke="#4a4a4a" stroke-width="1.5"/>
<text x="330.15" y="589.00" text-anchor="middle" font-size="10.4" fill="#4a4a4a" stroke="#4a4a4a" stroke-width="0.25">50</text>
<line x1="386.56" y1="575.4" x2="386.56" y2="578.6" stroke="#4a4a4a" stroke-width="1.5"/>
<text x="386.56" y="589.00" text-anchor="middle" font-size="10.4" fill="#4a4a4a" stroke="#4a4a4a" stroke-width="0.25">100</text>
<line x1="442.97" y1="575.4" x2="442.97" y2="578.6" stroke="#4a4a4a" stroke-width="1.5"/>
<text x="442.97" y="589.00" text-anchor="middle" font-size="10.4" fill="#4a4a4a" stroke="#4a4a4a" stroke-width="0.25">150</text>
<line x1="499.37" y1="575.4" x2="499.37" y2="578.6" stroke="#4a4a4a" stroke-width="1.5"/>
<text x="499.37" y="589.00" text-anchor="middle" font-size="10.4" fill="#4a4a4a" stroke="#4a4a4a" stroke-width="0.25">200</text>
<line x1="555.77" y1="575.4" x2="555.77" y2="578.6" stroke="#4a4a4a" stroke-width="1.5"/>
<text x="555.77" y="589.00" text-anchor="middle" font-size="10.4" fill="#4a4a4a" stroke="#4a4a4a" stroke-width="0.25">250</text>
<line x1="612.18" y1="575.4" x2="612.18" y2="578.6" stroke="#4a4a4a" stroke-width="1.5"/>
<text x="612.18" y="589.00" text-anchor="middle" font-size="10.4" fill="#4a4a4a" stroke="#4a4a4a" stroke-width="0.25">300</text>
<line x1="668.58" y1="575.4" x2="668.58" y2="578.6" stroke="#4a4a4a" stroke-width="1.5"/>
<text x="668.58" y="589.00" text-anchor="middle" font-size="10.4" fill="#4a4a4a" stroke="#4a4a4a" stroke-width="0.25">350</text>
<line x1="724.99" y1="575.4" x2="724.99" y2="578.6" stroke="#4a4a4a" stroke-width="1.5"/>
<text x="724.99" y="589.00" text-anchor="middle" font-size="10.4" fill="#4a4a4a" stroke="#4a4a4a" stroke-width="0.25">400</text>
<line x1="781.39" y1="575.4" x2="781.39" y2="578.6" stroke="#4a4a4a" stroke-width="1.5"/>
<text x="781.39" y="589.00" text-anchor="middle" font-size="10.4" fill="#4a4a4a" stroke="#4a4a4a" stroke-width="0.25">450</text>
<line x1="837.80" y1="575.4" x2="837.80" y2="578.6" stroke="#4a4a4a" stroke-width="1.5"/>
<text x="835.70" y="589.00" text-anchor="middle" font-size="10.4" fill="#4a4a4a" stroke="#4a4a4a" stroke-width="0.25">500</text>
<rect x="264.6" y="423.7" width="8.6" height="8.6" fill="#edb120"/>
<text x="277.5" y="432.40" font-size="12.6" fill="#3a3a3a" stroke="#3a3a3a" stroke-width="0.2">theta</text>
</svg></body></html>
